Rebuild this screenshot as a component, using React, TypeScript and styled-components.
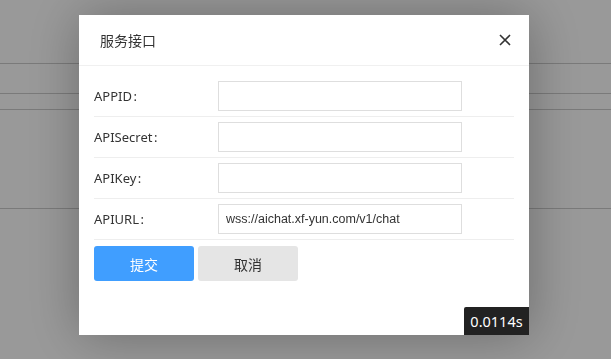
import styled, { createGlobalStyle } from "styled-components";

const GlobalStyle = createGlobalStyle`
  html, body {
    margin: 0;
    padding: 0;
    width: 611px;
    height: 359px;
    overflow: hidden;
    background: #fff;
    font-family: "Noto Sans", "Noto Sans CJK SC", sans-serif;
  }
`;

const Page = styled.div`
  width: 611px;
  height: 359px;
  background: #fff;
`;

const PageRow = styled.div<{ $h: number }>`
  height: ${(p) => p.$h}px;
  border-bottom: 1px solid #ccc;
`;

const Mask = styled.div`
  position: fixed;
  inset: 0;
  background: rgba(0, 0, 0, 0.4);
`;

const Layer = styled.div`
  position: fixed;
  inset: 0;
  display: flex;
  align-items: flex-start;
  padding: 15px 0 0 79px;
`;

const Modal = styled.div`
  position: relative;
  width: 450px;
  height: 320px;
  background: #fff;
  box-shadow: 1px 1px 50px rgba(0, 0, 0, 0.3);
  display: flex;
  flex-direction: column;
`;

const Header = styled.div`
  height: 50px;
  border-bottom: 1px solid #f0f0f0;
  display: flex;
  align-items: center;
  justify-content: space-between;
  padding: 0 17px 0 21px;
`;

const Title = styled.span`
  font-family: "Noto Sans CJK SC", sans-serif;
  font-size: 14px;
  color: #333;
`;

const Close = styled.button`
  border: 0;
  background: none;
  padding: 0;
  width: 14px;
  height: 14px;
  display: flex;
  cursor: pointer;
`;

const Body = styled.div`
  padding: 10px 15px 0;
`;

const Row = styled.div`
  display: flex;
  align-items: center;
  padding: 5px 0;
  border-bottom: 1px solid #eee;
`;

const Label = styled.label`
  width: 124px;
  font-size: 13px;
  color: #333;
`;

const Colon = styled.span`
  margin-left: 1.5px;
`;

const Input = styled.input`
  box-sizing: border-box;
  width: 244px;
  height: 30px;
  border: 1px solid #dedede;
  padding: 0 7px;
  font-family: "Liberation Sans", Arial, sans-serif;
  font-size: 12.5px;
  color: #333;
  outline: none;
`;

const Actions = styled.div`
  display: flex;
  gap: 4px;
  margin-top: 6px;
`;

const Button = styled.button<{ $primary?: boolean }>`
  width: 100px;
  height: 35px;
  border: 0;
  border-radius: 3px;
  font-family: "Noto Sans CJK SC", sans-serif;
  font-size: 14px;
  background: ${(p) => (p.$primary ? "#409eff" : "#e5e5e5")};
  color: ${(p) => (p.$primary ? "#fff" : "#333")};
  cursor: pointer;
`;

const Timer = styled.div`
  position: absolute;
  right: 0;
  bottom: 0;
  width: 65px;
  height: 28px;
  background: #222;
  border-top-left-radius: 2px;
  color: #fff;
  font-size: 14.5px;
  display: flex;
  align-items: center;
  justify-content: center;
`;

const fields = [
  { label: "APPID", value: "" },
  { label: "APISecret", value: "" },
  { label: "APIKey", value: "" },
  { label: "APIURL", value: "wss://aichat.xf-yun.com/v1/chat" },
];

export default function App() {
  return (
    <>
      <GlobalStyle />
      <Page>
        <PageRow $h={63} />
        <PageRow $h={29} />
        <PageRow $h={15} />
        <PageRow $h={98} />
      </Page>
      <Mask />
      <Layer>
        <Modal>
          <Header>
            <Title>服务接口</Title>
            <Close aria-label="close">
              <svg width="14" height="14" viewBox="0 0 14 14">
                <path d="M2 2L12 12M12 2L2 12" stroke="#333" strokeWidth="1.6" />
              </svg>
            </Close>
          </Header>
          <Body>
            {fields.map((f) => (
              <Row key={f.label}>
                <Label>
                  {f.label}
                  <Colon>:</Colon>
                </Label>
                <Input defaultValue={f.value} />
              </Row>
            ))}
            <Actions>
              <Button $primary>提交</Button>
              <Button>取消</Button>
            </Actions>
          </Body>
          <Timer>0.0114s</Timer>
        </Modal>
      </Layer>
    </>
  );
}
